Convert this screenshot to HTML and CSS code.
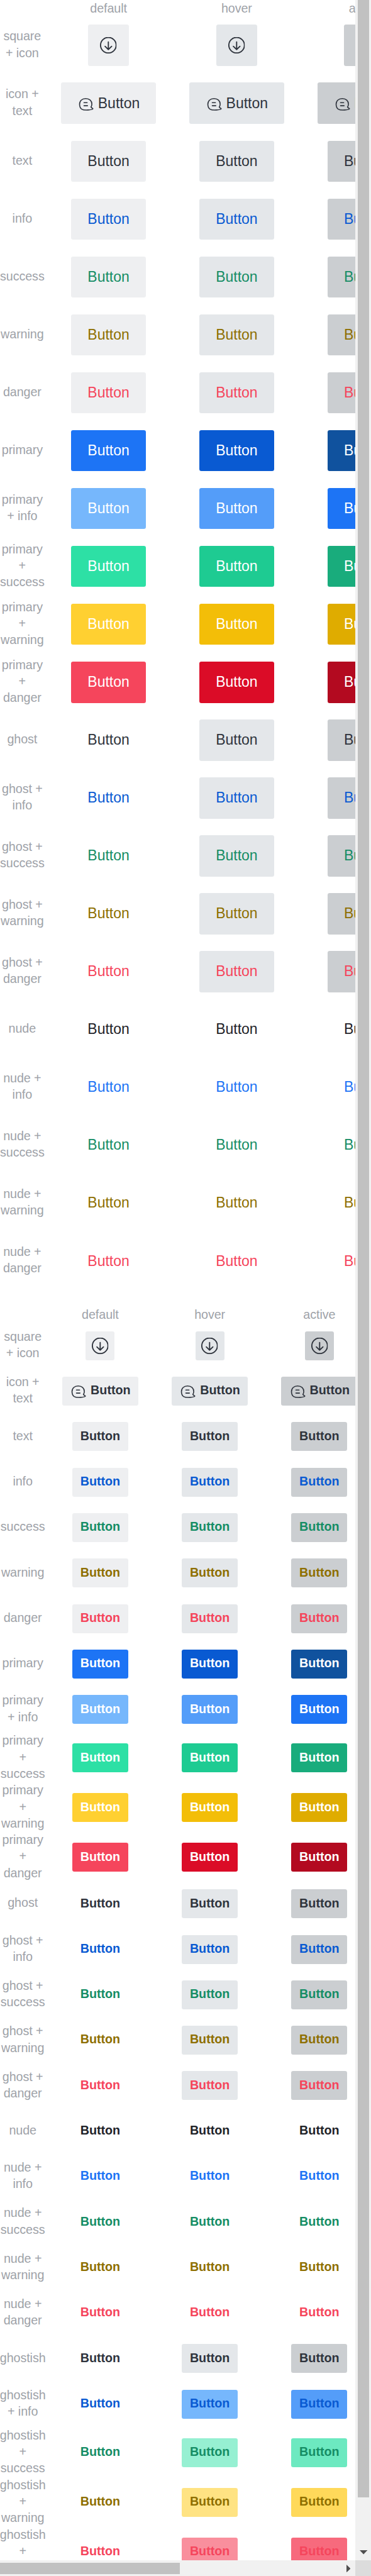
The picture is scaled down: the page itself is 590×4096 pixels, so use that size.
FILE: index.html
```html
<!DOCTYPE html>
<html lang="en">
<head>
<meta charset="utf-8">
<title>Button states</title>
<link rel="stylesheet" href="styles.css">
</head>
<body>
<svg class="sprite" aria-hidden="true">
  <symbol id="icon-download" viewBox="0 0 32 32">
    <circle cx="16.2" cy="15.7" r="15.1" stroke-width="2.3"/>
    <path d="M16.2 9.4V24M9.8 17.8l6.400 6.200 6.400-6.200" stroke-width="2.3"/>
  </symbol>
  <symbol id="icon-chat" viewBox="0 0 32 32">
    <path d="M16.2 7C9 7 4.3 11.400 4.3 18c0 4.400 1.400 7.600 4.200 9.500 2.600 1.600 7.800 1.900 12.300 1.600 4.300-.3 8.500-1.200 9.200-2.200.7-1.100-2.100-1.300-3.600-3.400C27.400 22 28.100 20 28.100 17.600 28.100 11.400 23.400 7 16.200 7Z" stroke-width="2"/>
    <path d="M12.800 14.900h6.200M12.800 20.800h7" stroke-width="2"/>
  </symbol>
</svg>
<div class="frame">
  <main class="content">
    <section class="sheet sheet-large" id="large"></section>
    <section class="sheet sheet-small" id="small"></section>
  </main>
  <div class="bar bar-vertical">
    <div class="thumb"></div>
    <svg class="arrow-down" viewBox="0 0 15 8"><path d="M0 0h15L7.500 8z"/></svg>
  </div>
  <div class="bar bar-horizontal">
    <div class="thumb"></div>
    <svg class="arrow-right" viewBox="0 0 8 15"><path d="M0 0v15L8 7.500z"/></svg>
  </div>
  <div class="corner"></div>
</div>
<script src="sheet.js"></script>
</body>
</html>
```

FILE: styles.css
```css
html {
  font-size: 16.4366px;
}

body {
  margin: 0;
  background: #fff;
  font-family: "Liberation Sans", Arial, sans-serif;
  overflow: hidden;
}

.sprite {
  display: none;
}

.frame {
  display: grid;
  grid-template-columns: minmax(0, 1fr) 1.5rem;
  grid-template-rows: minmax(0, 1fr) 1.5rem;
  width: 590px;
  height: 4096px;
}

.content {
  display: flex;
  flex-direction: column;
  gap: 1.6rem;
  overflow: hidden;
}

.sheet {
  flex: none;
}

.row {
  display: grid;
}

.sheet-large .row {
  grid-template-columns: 4.3rem repeat(3, 12.4rem);
  height: 5.6rem;
}

.sheet-small .row {
  grid-template-columns: 4.4rem repeat(3, 10.6rem);
  height: 4.4rem;
}

.sheet .row-head {
  height: 1.6rem;
}

.sheet-small .row-tall {
  height: 4.8rem;
}

.label {
  display: flex;
  align-items: center;
  justify-content: center;
  padding-bottom: 0.2rem;
  color: #9ea2a8;
  font-size: 1.2rem;
  line-height: 1.6rem;
  letter-spacing: -0.005rem;
  text-align: center;
  white-space: nowrap;
}

.cell {
  display: flex;
  align-items: center;
  justify-content: center;
}

.button {
  display: flex;
  align-items: center;
  justify-content: center;
  box-sizing: border-box;
  width: 7.2rem;
  height: 4rem;
  border-radius: 0.2rem;
  font-size: 1.4rem;
  line-height: 2rem;
  white-space: nowrap;
}

.button.square {
  width: 4rem;
}

.button.with-icon {
  gap: 0.4rem;
  width: 9.2rem;
}

.sheet-small .button {
  width: 5.4rem;
  height: 2.8rem;
  padding-bottom: 0.15rem;
  font-size: 1.2rem;
  font-weight: 700;
}

.sheet-small .button.square {
  width: 2.8rem;
  padding-bottom: 0;
}

.sheet-small .button.with-icon {
  width: 7.4rem;
}

.icon {
  flex: none;
  width: 1.6rem;
  height: 1.6rem;
  overflow: visible;
  fill: none;
  stroke: currentColor;
  stroke-linecap: round;
  stroke-linejoin: round;
}

.icon symbol {
  overflow: visible;
}

/* text colours */
.ink-dark { color: #2f343d; }
.ink-nude { color: #1f2329; }
.ink-blue { color: #095ad2; }
.ink-bright { color: #1d74f5; }
.ink-green { color: #158d65; }
.ink-yellow { color: #8e6f00; }
.ink-red { color: #f5455c; }
.ink-white { color: #fff; }

/* fills, one custom property per state */
.default { background: var(--d, transparent); }
.hover { background: var(--h, transparent); }
.active { background: var(--a, transparent); }

.fill-basic { --d: #eeeff1; --h: #e4e7ea; --a: #cbced1; }
.fill-ghost { --h: #e4e7ea; --a: #cbced1; }
.fill-primary { --d: #1d74f5; --h: #095ad2; --a: #10529e; }
.fill-info { --d: #76b7fc; --h: #549df9; --a: #1d74f5; }
.fill-success { --d: #2de0a5; --h: #1ecb92; --a: #19ac7c; }
.fill-warning { --d: #ffd031; --h: #f3be08; --a: #dfac00; }
.fill-danger { --d: #f5455c; --h: #db0c27; --a: #b30a20; }
.fill-soft-info { --h: #76b7fc; --a: #549df9; }
.fill-soft-success { --h: #96f0d2; --a: #6ce9c0; }
.fill-soft-warning { --h: #ffe383; --a: #ffd95a; }
.fill-soft-danger { --h: #f98f9d; --a: #f76a7d; }

/* scroll bars */
.bar {
  display: flex;
  align-items: center;
  justify-content: space-between;
  background: #f1f1f1;
}

.bar .thumb {
  background: #c1c1c1;
}

.bar svg {
  flex: none;
  fill: #505050;
}

.bar-vertical {
  flex-direction: column;
  padding-bottom: 0.6rem;
}

.bar-vertical .thumb {
  width: 1.1rem;
  height: 241.6rem;
}

.bar-horizontal {
  padding-right: 0.5rem;
}

.bar-horizontal .thumb {
  width: 17.4rem;
  height: 1.1rem;
}

.arrow-down {
  width: 0.75rem;
  height: 0.4rem;
}

.arrow-right {
  width: 0.4rem;
  height: 0.75rem;
}

.corner {
  background: #dcdcdc;
}
```

FILE: sheet.js
```js
// Each row: label lines (split on "|"), ink, fill, optional content kind.
const common = [
  ["square|+ icon", "dark", "basic", "square"],
  ["icon +|text", "dark", "basic", "with-icon"],
  ["text", "dark", "basic"],
  ["info", "blue", "basic"],
  ["success", "green", "basic"],
  ["warning", "yellow", "basic"],
  ["danger", "red", "basic"],
  ["primary", "white", "primary"],
  ["primary|+ info", "white", "info"],
  ["primary|+|success", "white", "success"],
  ["primary|+|warning", "white", "warning"],
  ["primary|+|danger", "white", "danger"],
  ["ghost", "dark", "ghost"],
  ["ghost +|info", "blue", "ghost"],
  ["ghost +|success", "green", "ghost"],
  ["ghost +|warning", "yellow", "ghost"],
  ["ghost +|danger", "red", "ghost"],
  ["nude", "nude", "none"],
  ["nude +|info", "bright", "none"],
  ["nude +|success", "green", "none"],
  ["nude +|warning", "yellow", "none"],
  ["nude +|danger", "red", "none"],
];
const ghostish = [
  ["ghostish", "dark", "ghost"],
  ["ghostish|+ info", "blue", "soft-info"],
  ["ghostish|+|success", "green", "soft-success"],
  ["ghostish|+|warning", "yellow", "soft-warning"],
  ["ghostish|+|danger", "red", "soft-danger"],
];
const states = ["default", "hover", "active"];
const icon = (name) => `<svg class="icon"><use href="#icon-${name}"/></svg>`;

function content(kind) {
  if (kind === "square") return icon("download");
  if (kind === "with-icon") return icon("chat") + "<span>Button</span>";
  return "<span>Button</span>";
}

function row([label, ink, fill, kind = ""]) {
  const lines = label.split("|");
  const cells = states.map((state) =>
    `<div class="cell"><div class="button ${state} ink-${ink} fill-${fill} ${kind}">${content(kind)}</div></div>`
  ).join("");
  const tall = lines.length > 2 ? " row-tall" : "";
  return `<div class="row${tall}"><div class="label"><span>${lines.join("<br>")}</span></div>${cells}</div>`;
}

function sheet(id, rows) {
  const head = `<div class="row row-head"><div></div>${states.map((s) => `<div class="label">${s}</div>`).join("")}</div>`;
  document.getElementById(id).innerHTML = head + rows.map(row).join("");
}

sheet("large", common);
sheet("small", common.concat(ghostish));
```
